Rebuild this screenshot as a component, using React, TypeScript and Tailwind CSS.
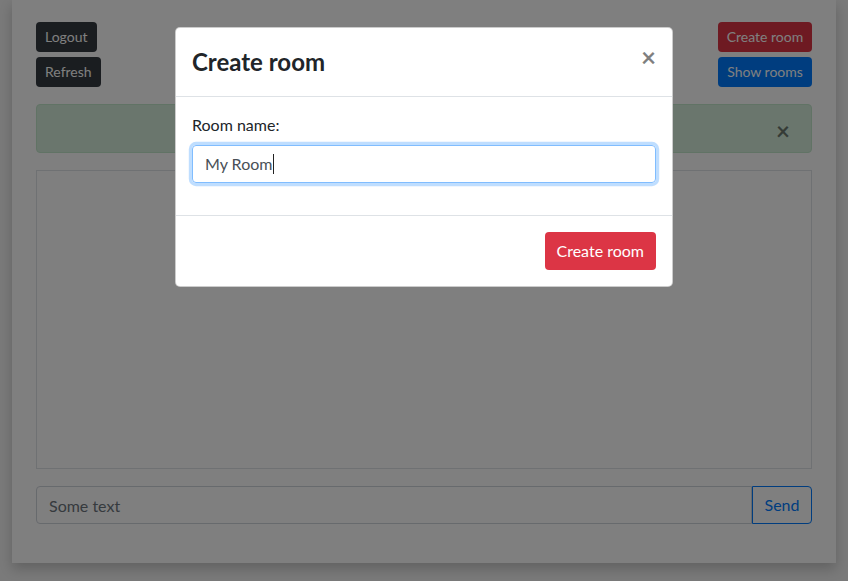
import { useState } from 'react';

export default function App() {
  const [message, setMessage] = useState('');

  return (
    <div className="relative min-h-[581px] bg-[#f4f4f4] pl-3 pr-3 text-[#212529] font-['Lato','Liberation_Sans',sans-serif]">
      {/* Chat page */}
      <div className="h-[563px] w-[824px] bg-white px-6 pt-[22px] shadow-[0_6px_12px_rgba(0,0,0,0.2)]">
        <div className="flex items-start justify-between">
          <div className="flex flex-col items-start gap-[5px]">
            <button className="rounded bg-[#343a40] px-[9px] py-1 text-sm leading-[22px] text-white">Logout</button>
            <button className="rounded bg-[#343a40] px-[9px] py-1 text-sm leading-[22px] text-white">Refresh</button>
          </div>
          <div className="flex w-[94px] flex-col items-stretch gap-[5px]">
            <button className="rounded bg-[#dc3545] px-2 py-1 text-sm leading-[22px] text-white">Create room</button>
            <button className="rounded bg-[#007bff] px-2 py-1 text-sm leading-[22px] text-white">Show rooms</button>
          </div>
        </div>

        <div className="mt-[17px] flex h-[49px] items-center justify-end rounded border border-[#c3e6cb] bg-[#d4edda] pr-[21px] text-[#155724]">
          <span className="mt-1 text-2xl font-bold leading-none text-black/50">×</span>
        </div>

        <div className="mt-[17px] h-[299px] border border-[#dee2e6] bg-white"></div>

        <div className="mt-[17px] flex h-[38px]">
          <input
            value={message}
            onChange={(e) => setMessage(e.target.value)}
            placeholder="Some text"
            className="h-full flex-1 rounded-l border border-[#ced4da] px-3 text-base text-[#495057] placeholder:text-[#6c757d] outline-none"
          />
          <button className="h-full w-[60px] rounded-r border border-[#007bff] text-base text-[#007bff]">Send</button>
        </div>
      </div>

      {/* Backdrop */}
      <div className="absolute inset-0 bg-black/50"></div>

      {/* Modal */}
      <div className="absolute left-[175px] top-[27px] w-[498px] rounded-[5px] border border-black/20 bg-white">
        <div className="flex items-start justify-between border-b border-[#dee2e6] px-4 py-4">
          <h4 className="text-2xl font-bold leading-9">Create room</h4>
          <button className="-mt-[5px] text-[26px] font-bold leading-9 text-black/50">×</button>
        </div>
        <div className="p-4">
          <label className="mb-2 block text-base leading-6">Room name:</label>
          <div className="mb-4 flex h-[38px] items-center rounded border border-[#80bdff] px-3 text-base text-[#495057] shadow-[0_0_0_3.2px_rgba(0,123,255,0.25)]">
            <span>My Room</span>
            <span className="ml-px h-[20px] w-px bg-[#222]"></span>
          </div>
        </div>
        <div className="flex justify-end border-t border-[#dee2e6] p-4">
          <button className="h-[38px] rounded bg-[#dc3545] px-3 text-base text-white">Create room</button>
        </div>
      </div>
    </div>
  );
}
